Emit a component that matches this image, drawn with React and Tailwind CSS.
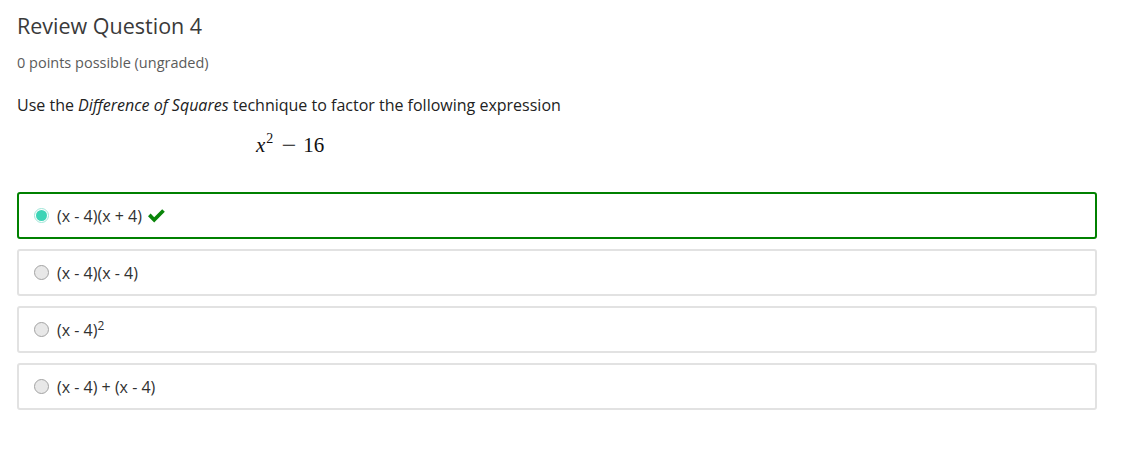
import React from 'react'

const options = [
  { id: 1, label: '(x - 4)(x + 4)', selected: true },
  { id: 2, label: '(x - 4)(x - 4)' },
  { id: 3, label: '(x - 4)', sup: '2' },
  { id: 4, label: '(x - 4) + (x - 4)' },
]

function Radio({ selected }) {
  if (selected) {
    return (
      <span className="w-[15px] h-[15px] rounded-full border border-[#9fe6d8] bg-white flex items-center justify-center shrink-0">
        <span className="w-[11px] h-[11px] rounded-full bg-[#3dd4b6]" />
      </span>
    )
  }
  return <span className="w-[15px] h-[15px] rounded-full border border-[#a3a3a3] bg-[#e8e8e8] shrink-0" />
}

function Check() {
  // font-awesome style heavy check
  return (
    <svg width="17" height="14" viewBox="0 0 17 14" className="ml-[6px]">
      <polygon points="0,7.2 2.6,4.6 6.2,8.2 14.2,0.2 16.8,2.8 6.2,13.4" fill="#0a850a" />
    </svg>
  )
}

export default function App() {
  return (
    <div className="min-h-screen bg-white pl-[17px] pr-[32px] pt-[12px]" style={{ fontFamily: '"Open Sans", sans-serif' }}>
      {/* Header */}
      <h1 className="text-[21.5px] leading-[28px] text-[#3a3a3a] font-normal">Review Question 4</h1>
      <p className="text-[14.5px] text-[#5b5b5b] mt-[13px] leading-[20px]">0 points possible (ungraded)</p>

      {/* Prompt */}
      <p className="text-[16px] text-[#222] mt-[21px] leading-[22px]">
        Use the <em>Difference of Squares</em> technique to factor the following expression
      </p>
      <div className="mt-[16px] ml-[239px] text-[21px] text-[#111] leading-[26px] flex items-baseline" style={{ fontFamily: '"Liberation Serif", serif' }}>
        <span className="italic">x</span>
        <span className="text-[14px] relative -top-[9px] ml-[1px]">2</span>
        <span className="ml-[10px] mr-[8px] scale-x-125 inline-block">−</span>
        <span>16</span>
      </div>

      {/* Options */}
      <div className="mt-[31px] flex flex-col gap-[10px]">
        {options.map(o => (
          <div
            key={o.id}
            className={`h-[47px] rounded-[3px] border-2 flex items-center pl-[15px] ${o.selected ? 'border-[#008100]' : 'border-[#e2e2e2]'}`}
          >
            <Radio selected={o.selected} />
            <span className="ml-[8px] text-[16px] text-[#313131]">
              {o.label}
              {o.sup && <sup className="text-[12px]">{o.sup}</sup>}
            </span>
            {o.selected && <Check />}
          </div>
        ))}
      </div>
    </div>
  )
}
